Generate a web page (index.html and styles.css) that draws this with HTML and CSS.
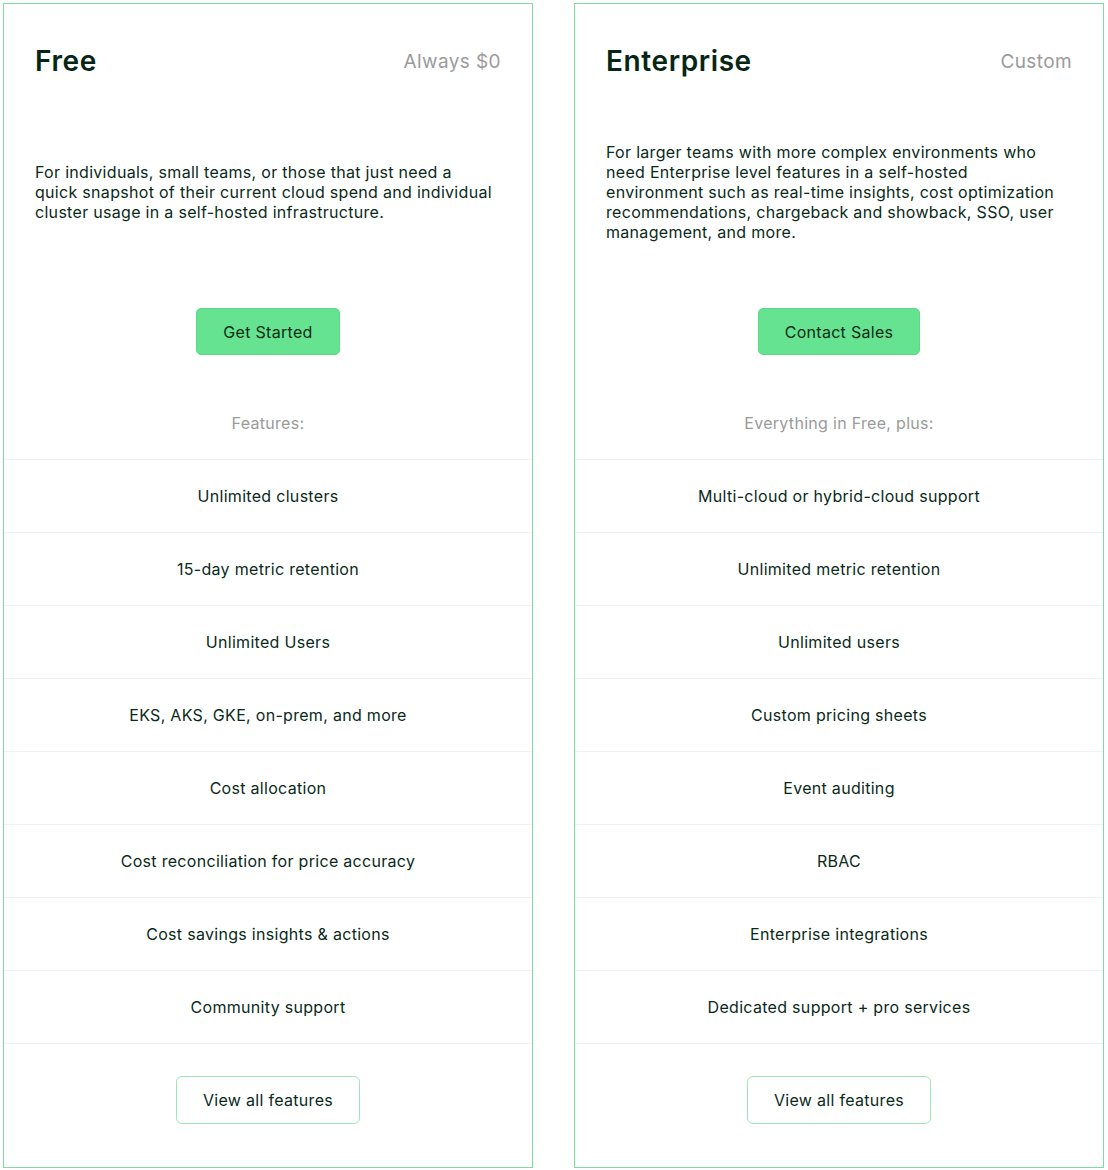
FILE: index.html
```html
<!DOCTYPE html>
<html lang="en">
<head>
<meta charset="utf-8">
<title>Pricing</title>
<link rel="stylesheet" href="styles.css">
</head>
<body>
<div class="plans">
  <section class="card">
    <div class="head">
      <h2 class="title">Free</h2>
      <span class="price">Always $0</span>
    </div>
    <div class="desc"><p>For individuals, small teams, or those that just need a quick snapshot of their current cloud spend and individual cluster usage in a self-hosted infrastructure.</p></div>
    <div class="cta"><a class="btn-primary" href="#">Get Started</a></div>
    <div class="label">Features:</div>
    <ul class="features">
      <li>Unlimited clusters</li>
      <li>15-day metric retention</li>
      <li>Unlimited Users</li>
      <li>EKS, AKS, GKE, on-prem, and more</li>
      <li>Cost allocation</li>
      <li>Cost reconciliation for price accuracy</li>
      <li>Cost savings insights &amp; actions</li>
      <li>Community support</li>
    </ul>
    <div class="foot"><a class="btn-outline" href="#">View all features</a></div>
  </section>
  <section class="card">
    <div class="head">
      <h2 class="title">Enterprise</h2>
      <span class="price">Custom</span>
    </div>
    <div class="desc"><p>For larger teams with more complex environments who need Enterprise level features in a self-hosted environment such as real-time insights, cost optimization recommendations, chargeback and showback, SSO, user management, and more.</p></div>
    <div class="cta"><a class="btn-primary" href="#">Contact Sales</a></div>
    <div class="label">Everything in Free, plus:</div>
    <ul class="features">
      <li>Multi-cloud or hybrid-cloud support</li>
      <li>Unlimited metric retention</li>
      <li>Unlimited users</li>
      <li>Custom pricing sheets</li>
      <li>Event auditing</li>
      <li>RBAC</li>
      <li>Enterprise integrations</li>
      <li>Dedicated support + pro services</li>
    </ul>
    <div class="foot"><a class="btn-outline" href="#">View all features</a></div>
  </section>
</div>
</body>
</html>
```
FILE: styles.css
```css
* { box-sizing: border-box; }
html, body { margin: 0; padding: 0; background: #fff; }
body {
  font-family: Inter, "Noto Sans", "Liberation Sans", sans-serif;
  color: #0a2a19;
  letter-spacing: 0.3px;
}
.plans {
  display: grid;
  grid-template-columns: 530px 530px;
  column-gap: 41px;
  padding: 3px 4px 0 3px;
}
.card {
  border: 1px solid #7fdca0;
  display: flex;
  flex-direction: column;
}
.head {
  display: flex;
  justify-content: space-between;
  align-items: center;
  height: 40px;
  margin: 37px 31px 0 31px;
}
.title {
  margin: 0;
  font-size: 28px;
  font-weight: 600;
  letter-spacing: 0.6px;
  color: #072515;
}
.price {
  font-size: 19px;
  color: #9b9b9b;
  letter-spacing: 0.4px;
}
.desc {
  height: 180px;
  margin: 21px 36px 0 31px;
  display: flex;
  align-items: center;
}
.desc p {
  margin: 0;
  font-size: 16px;
  line-height: 20px;
  color: #0a2a19;
}
.cta {
  display: flex;
  justify-content: center;
  margin-top: 26px;
}
.btn-primary {
  display: inline-flex;
  align-items: center;
  justify-content: center;
  height: 47px;
  padding: 0 26px;
  background: #66e390;
  border: 1px solid #5cd886;
  border-radius: 5px;
  color: #0a2b17;
  font-size: 16px;
  text-decoration: none;
}
.label {
  text-align: center;
  font-size: 16px;
  line-height: 20px;
  color: #9a9a9a;
  margin-top: 58px;
  padding-bottom: 26px;
}
.features {
  list-style: none;
  margin: 0;
  padding: 0;
}
.features li {
  height: 73px;
  border-top: 1px solid #f0f0f0;
  display: flex;
  align-items: center;
  justify-content: center;
  font-size: 16px;
  color: #0a2a19;
}
.foot {
  border-top: 1px solid #f0f0f0;
  display: flex;
  justify-content: center;
  padding: 32px 0 43px;
}
.btn-outline {
  display: inline-flex;
  align-items: center;
  justify-content: center;
  height: 48px;
  width: 184px;
  border: 1px solid #9fe6b7;
  border-radius: 6px;
  color: #0a2a19;
  font-size: 16px;
  text-decoration: none;
}
```
